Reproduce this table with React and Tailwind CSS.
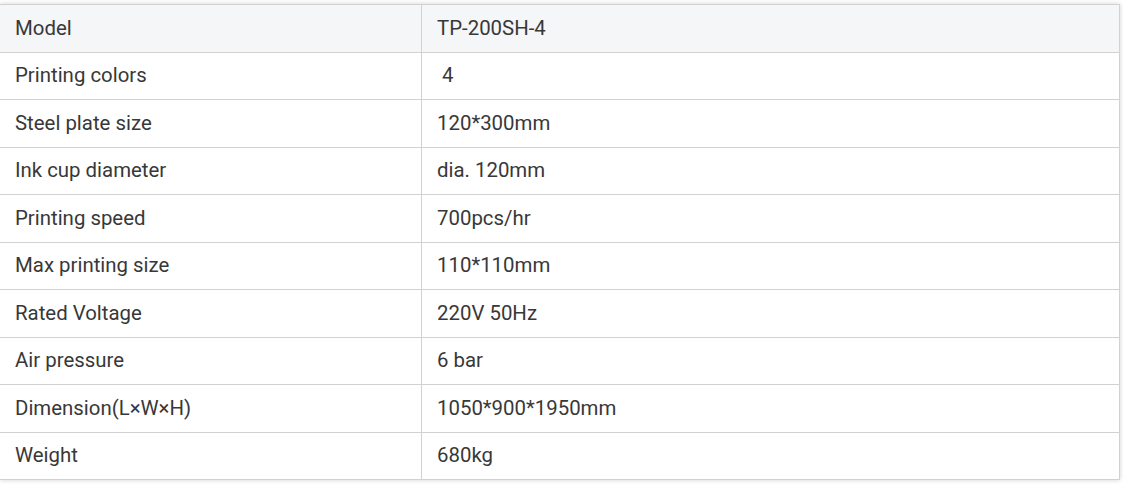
import React from 'react';

// spec rows for the product table
const rows = [
  ['Model', 'TP-200SH-4'],
  ['Printing colors', '\u00a04'],
  ['Steel plate size', '120*300mm'],
  ['Ink cup diameter', 'dia. 120mm'],
  ['Printing speed', '700pcs/hr'],
  ['Max printing size', '110*110mm'],
  ['Rated Voltage', '220V 50Hz'],
  ['Air pressure', '6 bar'],
  ['Dimension(L×W×H)', '1050*900*1950mm'],
  ['Weight', '680kg'],
];

export default function App() {
  return (
    <div className="w-[1123px] h-[484px] bg-white pt-[4px] overflow-hidden" style={{ fontFamily: 'Roboto, "Liberation Sans", sans-serif' }}>
      <div className="w-[1120px] border-t border-r border-[#d2d2d2] shadow-[0_0_5px_rgba(0,0,0,0.18)] bg-white">
        {rows.map(([k, v], i) => (
          <div
            key={k}
            className={`flex h-[47.5px] border-b border-[#d2d2d2] text-[20.4px] text-[#383838] ${i === 0 ? 'bg-[#f5f6f8]' : 'bg-white'}`}
          >
            <div className="w-[422px] shrink-0 flex items-center pl-[15px] border-r border-[#d2d2d2]">{k}</div>
            <div className="flex-1 flex items-center pl-[15px]">{v}</div>
          </div>
        ))}
      </div>
    </div>
  );
}
